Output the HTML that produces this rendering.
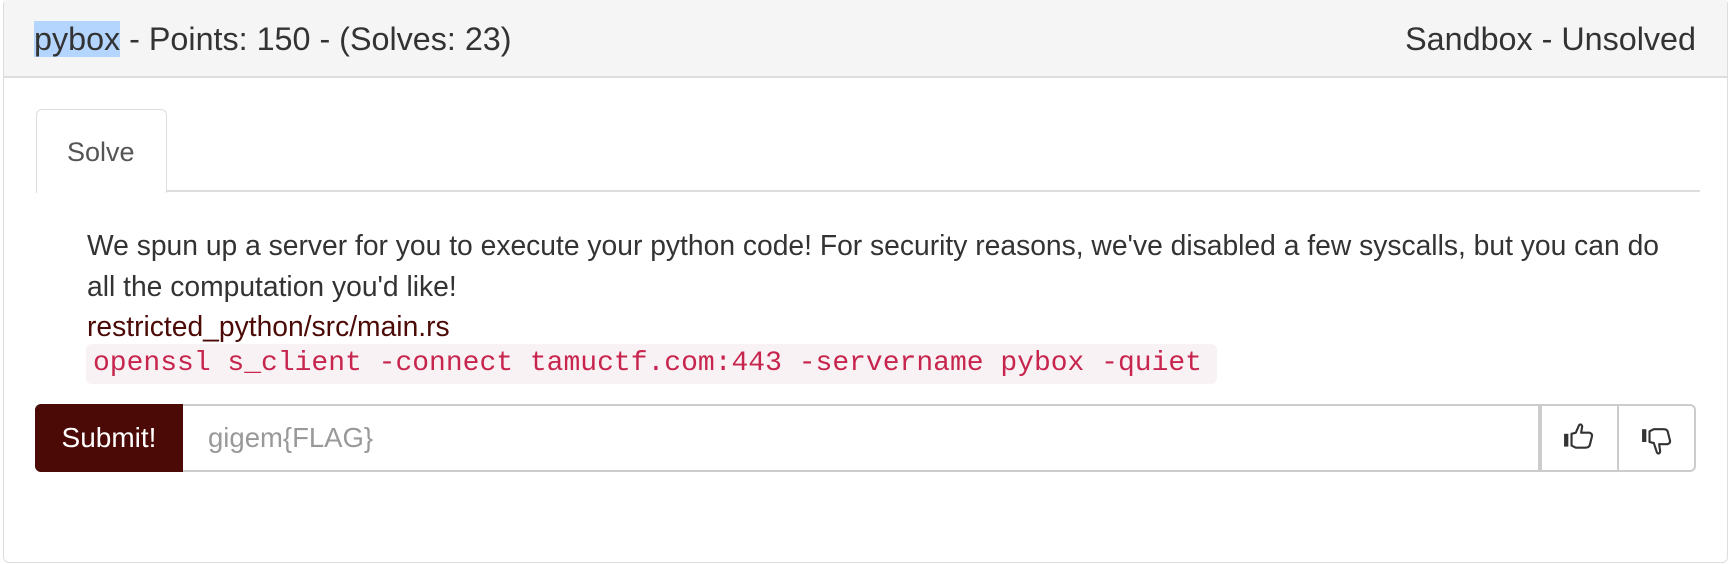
<!DOCTYPE html>
<html><head><meta charset="utf-8"><style>
*{box-sizing:border-box;margin:0;padding:0}
body{width:1732px;height:564px;background:#fff;font-family:"Liberation Sans",Arial,sans-serif;color:#333;position:relative;overflow:hidden}
.card{position:absolute;left:3px;top:-2px;width:1725px;height:565px;border:1.5px solid #ddd;border-radius:6px}
.hdr{position:absolute;left:0;top:0;width:100%;height:79px;background:#f5f5f5;border-bottom:2px solid #ddd}
.t{position:absolute;font-size:32.3px;line-height:38px;top:21px;white-space:nowrap}
.sel{background:#b4d5fe}
.tab{position:absolute;left:32px;top:110px;width:131px;height:84px;border:1.5px solid #ddd;border-bottom:none;border-radius:6px 6px 0 0;background:#fff;font-size:27px;color:#555;padding-left:30px;line-height:84px;z-index:2}
.tabline{position:absolute;left:32px;top:191px;width:1664px;height:2px;background:#ddd}
.p{position:absolute;left:83px;font-size:28.25px;line-height:40px;white-space:nowrap}
.code{position:absolute;left:82px;top:345px;width:1131px;height:40px;background:#f9f2f4;border-radius:6px;color:#c7254e;font-family:"Liberation Mono",monospace;font-size:28px;line-height:40px;padding-left:7px;white-space:nowrap}
.grp{position:absolute;left:35px;top:404px;width:1661px;height:68px;border:2px solid #ccc;border-radius:6px}
.sub{position:absolute;left:-2px;top:-2px;width:148px;height:68px;background:#4b0a06;border-radius:6px 0 0 6px;color:#fff;font-size:28px;line-height:68px;text-align:center}
.ph{position:absolute;left:171px;top:0;font-size:27.5px;color:#999;line-height:64px}
.b1{position:absolute;left:1501px;top:-2px;width:4px;height:68px;background:#ccc}
.b2{position:absolute;left:1580px;top:-2px;width:2px;height:68px;background:#ccc}
.ic{position:absolute}
</style></head><body>
<div class="card">
<div class="hdr">
<div class="t" style="left:30px"><span class="sel">pybox</span> - Points: 150 - (Solves: 23)</div>
<div class="t" style="right:31px">Sandbox - Unsolved</div>
</div>
<div class="tab">Solve</div>
<div class="tabline"></div>
<div class="p" style="top:226px">We spun up a server for you to execute your python code! For security reasons, we've disabled a few syscalls, but you can do</div>
<div class="p" style="top:267px">all the computation you'd like!</div>
<div class="p" style="top:307px;color:#4b0a06">restricted_python/src/main.rs</div>
<div class="code">openssl s_client -connect tamuctf.com:443 -servername pybox -quiet</div>
</div>
<div class="grp">
<div class="sub">Submit!</div>
<div class="ph">gigem{FLAG}</div>
<div class="b1"></div><div class="b2"></div>
<svg class="ic" style="left:1526px;top:16px" width="32" height="30" viewBox="0 0 30 28"><rect x="1" y="11" width="4" height="12" fill="#333"/><path d="M8 11 L12 10 L15 3 Q17 1 18 4 L17 10 L25 10 Q28 11 27 14 L25 22 Q24 24 21 24 L12 24 L8 22 Z" fill="none" stroke="#333" stroke-width="2" stroke-linejoin="round"/></svg>
<svg class="ic" style="left:1604px;top:20px" width="32" height="32" viewBox="0 0 30 30"><rect x="1" y="3" width="4" height="12" fill="#333"/><path d="M8 15 L12 16 L15 25 Q17 27 18 24 L17 17 L25 17 Q28 16 27 13 L25 5 Q24 3 21 3 L12 3 L8 5 Z" fill="none" stroke="#333" stroke-width="2" stroke-linejoin="round"/></svg>
</div>
</body></html>
